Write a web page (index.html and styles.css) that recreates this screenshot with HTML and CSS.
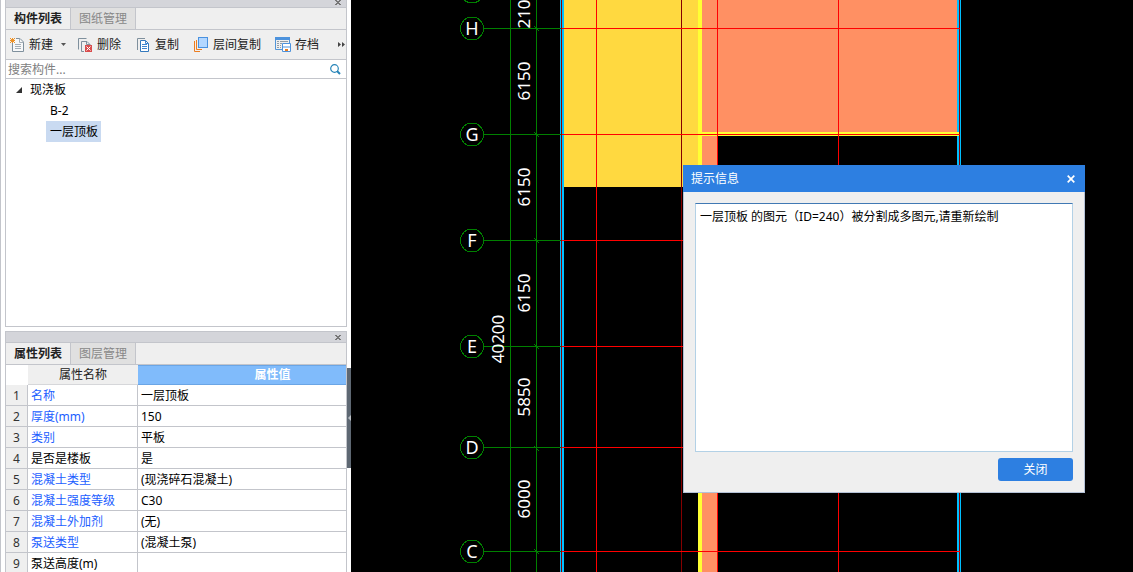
FILE: index.html
```html
<!DOCTYPE html>
<html lang="zh-CN">
<head>
<meta charset="utf-8">
<title>构件列表</title>
<link rel="stylesheet" href="styles.css">
</head>
<body>
<div class="app">
  <aside class="sidebar">
    <div class="panels">
      <section class="panel components">
        <div class="titlebar titlebar-short"><button class="panel-close" aria-label="关闭面板"><svg width="6" height="5" viewBox="0 0 6 5"><path d="M0 0h2v1h2V0h2v1H5v1H4v1h1v1h1v1H4V4H2v1H0V4h1V3h1V2H1V1H0z"/></svg></button></div>
        <div class="tabs" role="tablist">
          <button class="tab active" role="tab" aria-selected="true">构件列表</button>
          <button class="tab" role="tab" aria-selected="false">图纸管理</button>
        </div>
        <div class="toolbar">
          <div class="tool-group">
            <button class="tool"><svg class="icon" viewBox="0 0 16 16" fill="none"><path d="M6 1.500H10L13.500 5V14.500H2.500V6" stroke="#7f909d" fill="#f7f8f9"/><path d="M9.500 1.500V5.500H13.500M5 7.500H11M5 9.500H11M5 11.500H11" stroke="#a5afb7"/><path d="M0 1h1v1h1V1h1v1h1V1h1v1H4v1h1v1H4v1h1v1H4V5H3v1H2V5H1v1H0V5h1V4H0V3h1V2H0z" fill="#ee9226"/></svg>新建</button>
            <button class="caret" aria-label="新建选项"><svg width="5" height="3" viewBox="0 0 5 3"><path d="M0 0H5L2.500 3z" fill="#555"/></svg></button>
          </div>
          <button class="tool"><svg class="icon" viewBox="0 0 16 16" fill="none"><path d="M.5 12.500V1.500H8.500M6 14.500H3.500V4.500H9L12.500 8" stroke="#7f909d"/><path d="M8.500 4.500V7.500H12" stroke="#7f909d"/><rect x="7" y="8" width="7" height="7" fill="#d94c4c"/><path d="M8.500 9.500L12.500 13.500M12.500 9.500L8.500 13.500" stroke="#fff"/></svg>删除</button>
          <button class="tool"><svg class="icon" viewBox="0 0 16 16" fill="none"><path d="M1.500 13V1.500H9" stroke="#7f909d"/><path d="M4.500 3.500H9.500L12.500 6.500V14.500H4.500z" stroke="#3479bd" fill="#fff"/><path d="M9.500 3.500V6.500H12.500M6 7.500H11M6 9.500H11M6 11.500H11" stroke="#3f86d0"/></svg>复制</button>
          <button class="tool"><svg class="icon" viewBox="0 0 16 16" fill="none"><path d="M.5 4V14.500H6M2.500 3V12.500H8" stroke="#ec7d20"/><rect x="4.500" y=".5" width="9" height="10" fill="#b3d7ff" stroke="#4991df"/></svg>层间复制</button>
          <button class="tool"><svg class="icon" viewBox="0 0 16 16" fill="none"><path d="M-.5 .5H13.500V6M-.5 .5V12.500H6" stroke="#5295d7"/><path d="M-1 0H14V3H-1z" fill="#4d93dd"/><path d="M1 4.500H3M4 4.500H12M1 6.500H3M4 6.500H6M1 8.500H3M4 8.500H5M1 10.500H3M4 10.500H5" stroke="#929ca5"/><path d="M6.500 6.500H14.500V14.500H6.500z" stroke="#4d93dd" fill="#fff"/><path d="M6 10H15" stroke="#4d93dd"/><path d="M9 12H12V14H9z" fill="#ec7d20"/></svg>存档</button>
          <button class="more" aria-label="更多"><svg width="8" height="5" viewBox="0 0 8 5"><path d="M0 0L3 2.500 0 5zM4 0L7 2.500 4 5z" fill="#444"/></svg></button>
        </div>
        <div class="search">
          <input class="search-input" type="text" placeholder="搜索构件..." aria-label="搜索构件">
          <button class="search-btn" aria-label="搜索"><svg width="11" height="11" viewBox="0 0 11 11" fill="none"><circle cx="4.500" cy="4.500" r="3.800" stroke="#2684b8" stroke-width="1.200"/><path d="M7 7L10 10" stroke="#2684b8" stroke-width="2"/></svg></button>
        </div>
        <ul class="tree">
          <li class="tree-root"><svg class="twisty" width="6" height="6" viewBox="0 0 6 6"><path d="M6 0V6H0z" fill="#333"/></svg>现浇板
            <ul class="tree-children">
              <li><span class="node">B-2</span></li>
              <li><span class="node selected">一层顶板</span></li>
            </ul>
          </li>
        </ul>
      </section>
      <section class="panel properties">
        <div class="titlebar"><button class="panel-close" aria-label="关闭面板"><svg width="6" height="5" viewBox="0 0 6 5"><path d="M0 0h2v1h2V0h2v1H5v1H4v1h1v1h1v1H4V4H2v1H0V4h1V3h1V2H1V1H0z"/></svg></button></div>
        <div class="tabs" role="tablist">
          <button class="tab active" role="tab" aria-selected="true">属性列表</button>
          <button class="tab" role="tab" aria-selected="false">图层管理</button>
        </div>
        <table class="props">
          <colgroup><col class="col-num"><col class="col-name"><col></colgroup>
          <thead><tr><td class="corner"></td><th class="head-name" scope="col">属性名称</th><th class="head-value" scope="col">属性值</th></tr></thead>
          <tbody>
            <tr><td class="num">1</td><td class="key">名称</td><td>一层顶板</td></tr>
            <tr><td class="num">2</td><td class="key">厚度(mm)</td><td>150</td></tr>
            <tr><td class="num">3</td><td class="key">类别</td><td>平板</td></tr>
            <tr><td class="num">4</td><td>是否是楼板</td><td>是</td></tr>
            <tr><td class="num">5</td><td class="key">混凝土类型</td><td>(现浇碎石混凝土)</td></tr>
            <tr><td class="num">6</td><td class="key">混凝土强度等级</td><td>C30</td></tr>
            <tr><td class="num">7</td><td class="key">混凝土外加剂</td><td>(无)</td></tr>
            <tr><td class="num">8</td><td class="key">泵送类型</td><td>(混凝土泵)</td></tr>
            <tr><td class="num">9</td><td>泵送高度(m)</td><td></td></tr>
          </tbody>
        </table>
      </section>
    </div>
    <div class="gutter"><button class="collapse" aria-label="收起侧栏"><svg width="3" height="6" viewBox="0 0 3 6"><path d="M3 0V6L0 3z" fill="#b9bfc5"/></svg></button></div>
  </aside>
  <main class="canvas">
    <svg class="drawing" width="100%" height="100%" role="img" aria-label="楼板平面图">
      <g transform="translate(-351 0)" shape-rendering="crispEdges">
        <path d="M564 0H698V187H564z" fill="#ffd940"/>
        <path d="M702 0H957V132H702zM702 136H717V2000H702z" fill="#ff9063"/>
        <path d="M698 0H702V2000H698zM702 132H960V136H702z" fill="#ffff33"/>
        <path d="M560 0H561V2000H560zM562 0H564V2000H562zM957 0H959V132H957zM960 0H961V2000H960zM957 136H959V2000H957z" fill="#00bfff"/>
        <path d="M561.500 0V2000M681.500 0V2000M959.500 0V2000" stroke="#850000"/>
        <g fill="none" stroke="#ff0000">
          <path d="M596.500 0V2000M717.500 0V2000M838.500 0V2000"/>
          <path d="M562 28.500H960M562 134.500H960M562 240.500H960M562 346.500H960M562 447.500H960M562 551.500H960"/>
        </g>
        <g fill="none" stroke="#008000">
          <path d="M510.500 0V2000M536.500 0V2000"/>
          <path d="M484 28.500H561M484 134.500H561M484 240.500H561M484 346.500H561M484 447.500H561M484 551.500H561"/>
          <path d="M534 26L539 31M534 132L539 137M534 238L539 243M534 344L539 349M534 446L539 451M534 549L539 554"/>
          <circle cx="472" cy="-8.500" r="11.500"/><circle cx="472" cy="28.500" r="11.500"/><circle cx="472" cy="134.500" r="11.500"/><circle cx="472" cy="240.500" r="11.500"/><circle cx="472" cy="346.500" r="11.500"/><circle cx="472" cy="447.500" r="11.500"/><circle cx="472" cy="551.500" r="11.500"/>
        </g>
        <g class="axis">
          <text x="472" y="35">H</text><text x="472" y="141">G</text><text x="472" y="247">F</text><text x="472" y="353">E</text><text x="472" y="454">D</text><text x="472" y="558">C</text>
        </g>
        <g class="axis dimension">
          <text transform="translate(530 14) rotate(-90)">210</text>
          <text transform="translate(530 81) rotate(-90)">6150</text>
          <text transform="translate(530 187) rotate(-90)">6150</text>
          <text transform="translate(530 293) rotate(-90)">6150</text>
          <text transform="translate(530 397) rotate(-90)">5850</text>
          <text transform="translate(530 499) rotate(-90)">6000</text>
          <text transform="translate(504 339) rotate(-90)">40200</text>
        </g>
      </g>
    </svg>
    <div class="dialog" role="dialog" aria-labelledby="dialog-title">
      <header class="dialog-head">
        <span id="dialog-title">提示信息</span>
        <button class="dialog-x" aria-label="关闭"><svg width="8" height="8" viewBox="0 0 8 8"><path d="M.7.7L7.300 7.300M7.300.7L.7 7.300" stroke="#fff" stroke-width="1.700"/></svg></button>
      </header>
      <div class="dialog-body">
        <textarea class="message" aria-label="提示信息内容" readonly>一层顶板 的图元（ID=240）被分割成多图元,请重新绘制</textarea>
        <div class="dialog-actions"><button class="primary">关闭</button></div>
      </div>
    </div>
  </main>
</div>
</body>
</html>
```

FILE: styles.css
```css
* { box-sizing: border-box; }
html, body { height: 100%; }
body {
  margin: 0;
  overflow: hidden;
  background: #000;
  color: #000;
  font: 12px/20px "Noto Sans", "Noto Sans CJK SC", sans-serif;
}
button, input, textarea { font: inherit; color: inherit; margin: 0; padding: 0; border: 0; background: none; }
svg { display: block; flex: none; }
ul { list-style: none; margin: 0; padding: 0; }

.app { display: flex; height: 100%; }
.sidebar { flex: none; display: flex; width: 351px; background: #fff; border-left: 1px solid #c3c5cb; }
.panels { flex: 1; display: flex; flex-direction: column; gap: 4px; min-width: 0; padding-left: 4px; }
.panel { border: 1px solid #c3c5cb; }
.components { border-top: 0; }
.properties { flex: 1; min-height: 0; overflow: hidden; border-bottom: 0; }

.titlebar { display: flex; justify-content: flex-end; align-items: center; height: 11px; padding-right: 5px; background: #d4d5da; border-bottom: 1px solid #c3c5cb; }
.titlebar-short { height: 8px; align-items: flex-start; }
.panel-close svg { fill: #777; }

.tabs { display: flex; height: 22px; background: #efefef; border-bottom: 1px solid #c3c5cb; }
.tab { width: 65px; border-right: 1px solid #c3c5cb; background: #e0e0e0; color: #888; line-height: 20px; }
.tab.active { background: #efefef; color: #222; font-weight: bold; }

.toolbar { display: flex; align-items: center; gap: 15px; height: 30px; padding-left: 4px; background: #efefef; border-bottom: 1px solid #c3c5cb; color: #222; }
.tool-group { display: flex; align-items: center; gap: 8px; margin-right: -3px; }
.tool { display: flex; align-items: center; gap: 3px; white-space: nowrap; }
.icon { width: 16px; height: 16px; overflow: visible; }
.more { margin-left: auto; }

.search { display: flex; align-items: center; height: 19px; padding: 0 5px 0 2px; border-bottom: 1px solid #c3c5cb; }
.search-input { flex: 1; min-width: 0; height: 18px; padding-top: 2px; outline: 0; }
.search-input::placeholder { color: #808080; opacity: 1; }

.tree { height: 247px; padding-left: 10px; line-height: 21px; }
.tree-root { position: relative; padding-left: 14px; }
.twisty { position: absolute; left: 0; top: 8px; }
.tree-children { padding-left: 16px; }
.tree-children li { height: 21px; }
.node { display: inline-block; padding: 0 3px 0 4px; }
.node.selected { background: #c9daf1; }

.props { width: 100%; border-collapse: separate; border-spacing: 0; table-layout: fixed; }
.col-num { width: 22px; }
.col-name { width: 110px; }
.props th { height: 20px; padding: 1px 0 0; font-weight: normal; line-height: 18px; background: #efefef; border-bottom: 1px solid #d6d7da; color: #222; }
.props .head-value { padding: 0 0 0 61px; background: #80bbfb; border: 1px solid #6aa5e5; border-width: 1px 0; color: #fff; font-weight: bold; }
.props .corner { border: 0; padding: 0; height: 20px; }
.props td { height: 21px; padding: 2px 3px 0; line-height: 18px; white-space: nowrap; border-right: 1px solid #c3c5cb; border-bottom: 1px solid #c3c5cb; }
.props td:last-child { border-right: 0; }
.props .num { padding: 2px 0 0; text-align: center; background: #efefef; color: #333; }
.props .key { color: #1c5eff; }

.gutter { width: 4px; padding-top: 368px; }
.collapse { display: flex; align-items: center; justify-content: flex-end; width: 4px; height: 100px; background: #5e6873; }

.canvas { position: relative; flex: 1; min-width: 0; overflow: hidden; background: #000; }
.drawing { display: block; }
.axis { fill: #fff; font-size: 18px; text-anchor: middle; }
.dimension { font-size: 17px; }

.dialog { position: absolute; top: 165px; right: 48px; width: 402px; background: #efefef; border: 1px solid #b4c1d6; border-top: 0; }
.dialog-head { display: flex; align-items: center; justify-content: space-between; height: 27px; margin: 0 -1px; padding: 0 10px 0 8px; background: #2d7fe1; color: #fff; }
.dialog-body { padding: 11px; }
.message { display: block; width: 100%; height: 249px; padding: 3px 4px; line-height: 20px; resize: none; overflow: hidden; outline: 0; background: #fff; border: 1px solid #b3d1e6; border-top-color: #4079b4; }
.dialog-actions { display: flex; justify-content: flex-end; padding-top: 6px; }
.primary { width: 75px; height: 23px; padding-top: 1px; border-radius: 3px; background: #2d7fe1; color: #fff; }
```
